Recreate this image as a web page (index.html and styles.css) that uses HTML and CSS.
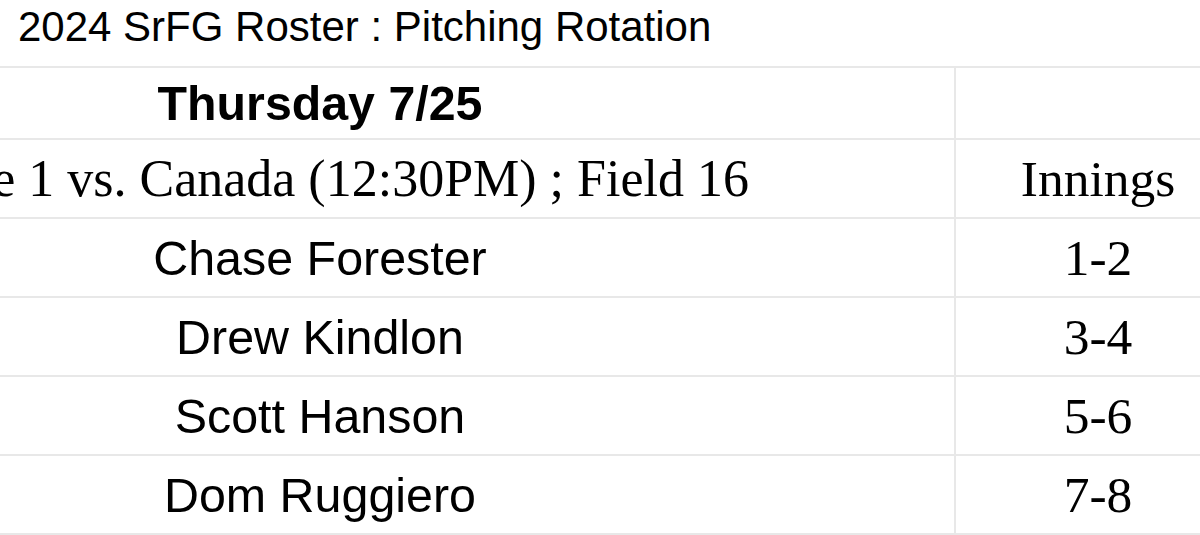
FILE: index.html
```html
<!DOCTYPE html>
<html>
<head>
<meta charset="utf-8">
<link rel="stylesheet" href="styles.css">
</head>
<body>
<div class="title">2024 SrFG Roster : Pitching Rotation</div>
<div class="sheet">
  <div class="cell main day">Thursday 7/25</div>
  <div class="cell side"></div>
  <div class="cell main game">Game 1 vs. Canada (12:30PM) ; Field 16</div>
  <div class="cell side serif">Innings</div>
  <div class="cell main name">Chase Forester</div>
  <div class="cell side serif">1-2</div>
  <div class="cell main name">Drew Kindlon</div>
  <div class="cell side serif">3-4</div>
  <div class="cell main name">Scott Hanson</div>
  <div class="cell side serif">5-6</div>
  <div class="cell main name">Dom Ruggiero</div>
  <div class="cell side serif">7-8</div>
</div>
</body>
</html>
```
FILE: styles.css
```css
html, body {
  margin: 0;
  padding: 0;
  background: #ffffff;
  overflow: hidden;
}
body {
  width: 1200px;
  height: 535px;
  color: #000;
}
.title {
  box-sizing: border-box;
  height: 66px;
  padding: 3px 0 0 18px;
  font-family: "Liberation Sans", Arial, sans-serif;
  font-size: 42px;
  line-height: 48px;
  white-space: nowrap;
}
.sheet {
  display: grid;
  grid-template-columns: 1270px 284px;
  grid-template-rows: 72px repeat(5, 79px);
  margin-left: -314px;
  width: 1554px;
  border-top: 2px solid #e8e8e8;
}
.cell {
  display: flex;
  align-items: center;
  justify-content: center;
  border-bottom: 2px solid #e8e8e8;
  white-space: nowrap;
  overflow: visible;
}
.main {
  border-right: 2px solid #e8e8e8;
}
.day {
  font-family: "Liberation Sans", Arial, sans-serif;
  font-weight: bold;
  font-size: 48.3px;
}
.game {
  font-family: "Liberation Serif", "Times New Roman", serif;
  font-size: 52px;
}
.name {
  font-family: "Liberation Sans", Arial, sans-serif;
  font-size: 48.4px;
}
.serif {
  font-family: "Liberation Serif", "Times New Roman", serif;
  font-size: 51.5px;
}
```
